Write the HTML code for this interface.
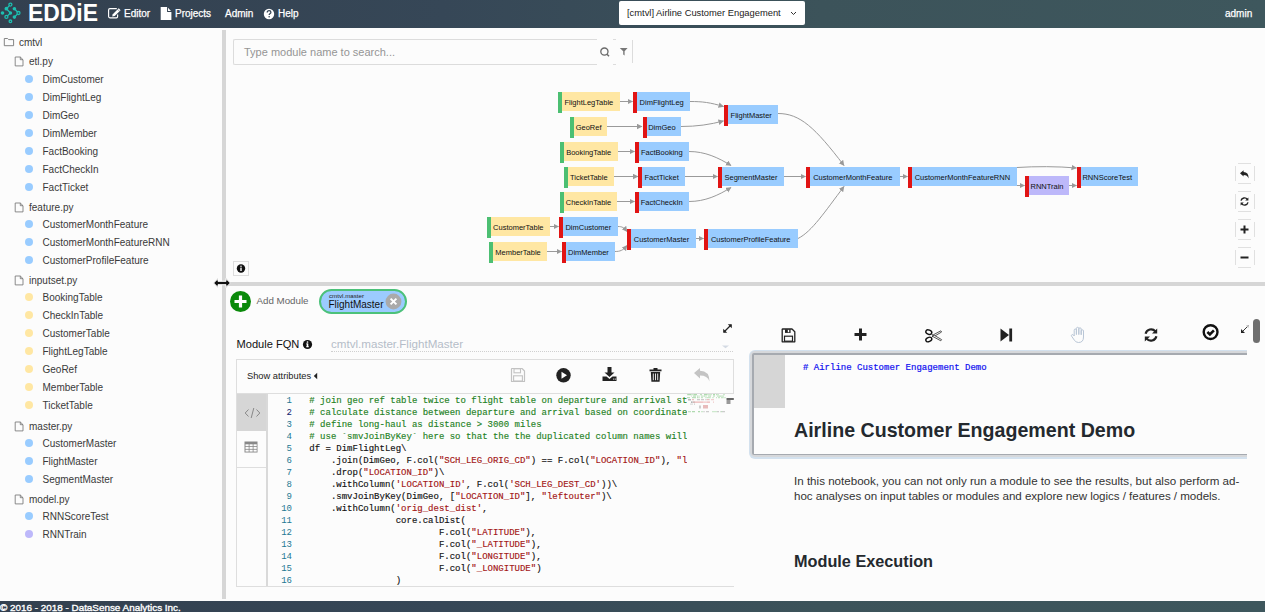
<!DOCTYPE html><html><head><meta charset="utf-8"><style>
html,body{margin:0;padding:0;width:1265px;height:612px;overflow:hidden;background:#fcfcfc;font-family:"Liberation Sans",sans-serif}
.a{position:absolute;white-space:pre}
svg{position:absolute;overflow:visible}
</style></head><body>
<div class="a" style="left:0;top:0;width:1265px;height:28px;background:linear-gradient(to right,#33404f 0%,#364757 35%,#3c535a 65%,#3e575d 100%)"></div>
<svg style="left:0;top:0" width="24" height="28" viewBox="0 0 24 28">
<g stroke="#1dbfb1" stroke-width="1.3" fill="none">
<polyline points="10.4,4.6 6.4,8.7 10.5,13 6.4,16.9"/>
<polyline points="14.4,8.7 18.5,13 14.4,17.1"/>
<circle cx="10.4" cy="4.6" r="1.5" fill="#34414f"/>
<circle cx="6.4" cy="16.9" r="1.5" fill="#34414f"/>
<circle cx="10.4" cy="21.3" r="1.3" fill="#34414f"/>
<circle cx="18.5" cy="13" r="1.5" fill="#34414f"/>
</g>
<g fill="#1dbfb1"><circle cx="2.5" cy="13" r="1.8"/><circle cx="6.4" cy="8.7" r="1.9"/><circle cx="10.5" cy="13" r="1.7"/><circle cx="14.4" cy="8.7" r="1.8"/><circle cx="14.4" cy="17.1" r="1.8"/></g>
</svg>
<div class="a " style="left:28px;top:-3.08px;font-size:23.6px;line-height:33px;height:33px;color:#fff;font-weight:700;font-family:'Liberation Sans';transform:scaleX(0.97);transform-origin:0 0">EDDiE</div>
<svg style="left:104px;top:4px" width="20" height="18" viewBox="0 0 20 18">
<path d="M12.8,4.6 H5.9 Q4.6,4.6 4.6,5.9 V12.6 Q4.6,13.8 5.9,13.8 H12.3 Q13.6,13.8 13.6,12.5 V10.6" stroke="#fff" stroke-width="1.15" fill="none"/>
<path d="M8.1,12.5 L8.8,10.2 L14.7,4.3 L16.6,6.2 L10.7,12.1 Z" fill="#fff"/>
<path d="M13.7,5.4 L15.6,7.3" stroke="#3a4a5a" stroke-width="0.5"/>
</svg>
<div class="a " style="left:124px;top:7.04px;font-size:10px;line-height:14px;height:14px;color:#fff;font-weight:400;font-family:'Liberation Sans';-webkit-text-stroke:0.25px #fff">Editor</div>
<svg style="left:160px;top:7px" width="12" height="14" viewBox="0 0 12 14">
<path d="M0.7,0.1 H7.1 V4.9 H11.4 V13 H0.7 Z" fill="#fff"/><path d="M8,0.8 L11,3.9 H8 Z" fill="#fff"/></svg>
<div class="a " style="left:175px;top:7.04px;font-size:10px;line-height:14px;height:14px;color:#fff;font-weight:400;font-family:'Liberation Sans';-webkit-text-stroke:0.25px #fff">Projects</div>
<div class="a " style="left:225px;top:7.04px;font-size:10px;line-height:14px;height:14px;color:#fff;font-weight:400;font-family:'Liberation Sans';-webkit-text-stroke:0.25px #fff">Admin</div>
<svg style="left:263px;top:8px" width="12" height="12" viewBox="0 0 12 12">
<circle cx="6" cy="6" r="5.2" fill="#fff"/>
<path d="M4.2,4.6 Q4.2,2.7 6.1,2.7 Q7.9,2.7 7.9,4.3 Q7.9,5.2 6.9,5.7 Q6.2,6.1 6.2,7" stroke="#364656" stroke-width="1.3" fill="none"/>
<circle cx="6.15" cy="8.8" r="0.8" fill="#364656"/></svg>
<div class="a " style="left:278px;top:7.04px;font-size:10px;line-height:14px;height:14px;color:#fff;font-weight:400;font-family:'Liberation Sans';-webkit-text-stroke:0.25px #fff">Help</div>
<div class="a" style="left:619px;top:1px;width:186px;height:24px;background:#fff;border-radius:2px"></div>
<div class="a " style="left:627px;top:7.46px;font-size:9.35px;line-height:13px;height:13px;color:#222;font-weight:400;font-family:'Liberation Sans';">[cmtvl] Airline Customer Engagement</div>
<svg style="left:790px;top:11px" width="7" height="5" viewBox="0 0 7 5"><path d="M1,1 L3.5,3.5 L6,1" stroke="#333" stroke-width="1" fill="none"/></svg>
<div class="a " style="left:1225px;top:7.04px;font-size:10px;line-height:14px;height:14px;color:#fff;font-weight:400;font-family:'Liberation Sans';-webkit-text-stroke:0.25px #fff">admin</div>
<svg style="left:3px;top:37px" width="12" height="10" viewBox="0 0 12 10"><path d="M1.3,1.5 H4.6 L5.6,2.6 H10.6 V8.7 H1.3 Z" stroke="#777" stroke-width="0.9" fill="none"/></svg>
<div class="a " style="left:19px;top:36.23px;font-size:10px;line-height:14px;height:14px;color:#3a3a3a;font-weight:400;font-family:'Liberation Sans';">cmtvl</div>
<svg style="left:14px;top:56.3px" width="11" height="11" viewBox="0 0 11 11"><path d="M1.2,1 H6.3 L9,3.7 V9.9 H1.2 Z M6.3,1 V3.7 H9" stroke="#777" stroke-width="0.85" fill="none"/></svg>
<div class="a " style="left:29px;top:55.33px;font-size:10px;line-height:14px;height:14px;color:#3a3a3a;font-weight:400;font-family:'Liberation Sans';">etl.py</div>
<div class="a" style="left:25px;top:75px;width:8px;height:8px;border-radius:50%;background:#99ccff"></div>
<div class="a " style="left:42.5px;top:73.44px;font-size:10px;line-height:14px;height:14px;color:#3a3a3a;font-weight:400;font-family:'Liberation Sans';">DimCustomer</div>
<div class="a" style="left:25px;top:93px;width:8px;height:8px;border-radius:50%;background:#99ccff"></div>
<div class="a " style="left:42.5px;top:91.44px;font-size:10px;line-height:14px;height:14px;color:#3a3a3a;font-weight:400;font-family:'Liberation Sans';">DimFlightLeg</div>
<div class="a" style="left:25px;top:111px;width:8px;height:8px;border-radius:50%;background:#99ccff"></div>
<div class="a " style="left:42.5px;top:109.44px;font-size:10px;line-height:14px;height:14px;color:#3a3a3a;font-weight:400;font-family:'Liberation Sans';">DimGeo</div>
<div class="a" style="left:25px;top:129px;width:8px;height:8px;border-radius:50%;background:#99ccff"></div>
<div class="a " style="left:42.5px;top:127.43px;font-size:10px;line-height:14px;height:14px;color:#3a3a3a;font-weight:400;font-family:'Liberation Sans';">DimMember</div>
<div class="a" style="left:25px;top:147px;width:8px;height:8px;border-radius:50%;background:#99ccff"></div>
<div class="a " style="left:42.5px;top:145.43px;font-size:10px;line-height:14px;height:14px;color:#3a3a3a;font-weight:400;font-family:'Liberation Sans';">FactBooking</div>
<div class="a" style="left:25px;top:165px;width:8px;height:8px;border-radius:50%;background:#99ccff"></div>
<div class="a " style="left:42.5px;top:163.43px;font-size:10px;line-height:14px;height:14px;color:#3a3a3a;font-weight:400;font-family:'Liberation Sans';">FactCheckIn</div>
<div class="a" style="left:25px;top:183px;width:8px;height:8px;border-radius:50%;background:#99ccff"></div>
<div class="a " style="left:42.5px;top:181.43px;font-size:10px;line-height:14px;height:14px;color:#3a3a3a;font-weight:400;font-family:'Liberation Sans';">FactTicket</div>
<svg style="left:14px;top:201.5px" width="11" height="11" viewBox="0 0 11 11"><path d="M1.2,1 H6.3 L9,3.7 V9.9 H1.2 Z M6.3,1 V3.7 H9" stroke="#777" stroke-width="0.85" fill="none"/></svg>
<div class="a " style="left:29px;top:200.53px;font-size:10px;line-height:14px;height:14px;color:#3a3a3a;font-weight:400;font-family:'Liberation Sans';">feature.py</div>
<div class="a" style="left:25px;top:220px;width:8px;height:8px;border-radius:50%;background:#99ccff"></div>
<div class="a " style="left:42.5px;top:218.43px;font-size:10px;line-height:14px;height:14px;color:#3a3a3a;font-weight:400;font-family:'Liberation Sans';">CustomerMonthFeature</div>
<div class="a" style="left:25px;top:238px;width:8px;height:8px;border-radius:50%;background:#99ccff"></div>
<div class="a " style="left:42.5px;top:236.43px;font-size:10px;line-height:14px;height:14px;color:#3a3a3a;font-weight:400;font-family:'Liberation Sans';">CustomerMonthFeatureRNN</div>
<div class="a" style="left:25px;top:256px;width:8px;height:8px;border-radius:50%;background:#99ccff"></div>
<div class="a " style="left:42.5px;top:254.43px;font-size:10px;line-height:14px;height:14px;color:#3a3a3a;font-weight:400;font-family:'Liberation Sans';">CustomerProfileFeature</div>
<svg style="left:14px;top:274.5px" width="11" height="11" viewBox="0 0 11 11"><path d="M1.2,1 H6.3 L9,3.7 V9.9 H1.2 Z M6.3,1 V3.7 H9" stroke="#777" stroke-width="0.85" fill="none"/></svg>
<div class="a " style="left:29px;top:273.54px;font-size:10px;line-height:14px;height:14px;color:#3a3a3a;font-weight:400;font-family:'Liberation Sans';">inputset.py</div>
<div class="a" style="left:25px;top:293px;width:8px;height:8px;border-radius:50%;background:#ffe7a3"></div>
<div class="a " style="left:42.5px;top:291.44px;font-size:10px;line-height:14px;height:14px;color:#3a3a3a;font-weight:400;font-family:'Liberation Sans';">BookingTable</div>
<div class="a" style="left:25px;top:311px;width:8px;height:8px;border-radius:50%;background:#ffe7a3"></div>
<div class="a " style="left:42.5px;top:309.44px;font-size:10px;line-height:14px;height:14px;color:#3a3a3a;font-weight:400;font-family:'Liberation Sans';">CheckInTable</div>
<div class="a" style="left:25px;top:329px;width:8px;height:8px;border-radius:50%;background:#ffe7a3"></div>
<div class="a " style="left:42.5px;top:327.44px;font-size:10px;line-height:14px;height:14px;color:#3a3a3a;font-weight:400;font-family:'Liberation Sans';">CustomerTable</div>
<div class="a" style="left:25px;top:347px;width:8px;height:8px;border-radius:50%;background:#ffe7a3"></div>
<div class="a " style="left:42.5px;top:345.44px;font-size:10px;line-height:14px;height:14px;color:#3a3a3a;font-weight:400;font-family:'Liberation Sans';">FlightLegTable</div>
<div class="a" style="left:25px;top:365px;width:8px;height:8px;border-radius:50%;background:#ffe7a3"></div>
<div class="a " style="left:42.5px;top:363.44px;font-size:10px;line-height:14px;height:14px;color:#3a3a3a;font-weight:400;font-family:'Liberation Sans';">GeoRef</div>
<div class="a" style="left:25px;top:383px;width:8px;height:8px;border-radius:50%;background:#ffe7a3"></div>
<div class="a " style="left:42.5px;top:381.44px;font-size:10px;line-height:14px;height:14px;color:#3a3a3a;font-weight:400;font-family:'Liberation Sans';">MemberTable</div>
<div class="a" style="left:25px;top:401px;width:8px;height:8px;border-radius:50%;background:#ffe7a3"></div>
<div class="a " style="left:42.5px;top:399.44px;font-size:10px;line-height:14px;height:14px;color:#3a3a3a;font-weight:400;font-family:'Liberation Sans';">TicketTable</div>
<svg style="left:14px;top:420.5px" width="11" height="11" viewBox="0 0 11 11"><path d="M1.2,1 H6.3 L9,3.7 V9.9 H1.2 Z M6.3,1 V3.7 H9" stroke="#777" stroke-width="0.85" fill="none"/></svg>
<div class="a " style="left:29px;top:419.54px;font-size:10px;line-height:14px;height:14px;color:#3a3a3a;font-weight:400;font-family:'Liberation Sans';">master.py</div>
<div class="a" style="left:25px;top:439px;width:8px;height:8px;border-radius:50%;background:#99ccff"></div>
<div class="a " style="left:42.5px;top:437.44px;font-size:10px;line-height:14px;height:14px;color:#3a3a3a;font-weight:400;font-family:'Liberation Sans';">CustomerMaster</div>
<div class="a" style="left:25px;top:457px;width:8px;height:8px;border-radius:50%;background:#99ccff"></div>
<div class="a " style="left:42.5px;top:455.44px;font-size:10px;line-height:14px;height:14px;color:#3a3a3a;font-weight:400;font-family:'Liberation Sans';">FlightMaster</div>
<div class="a" style="left:25px;top:475px;width:8px;height:8px;border-radius:50%;background:#99ccff"></div>
<div class="a " style="left:42.5px;top:473.44px;font-size:10px;line-height:14px;height:14px;color:#3a3a3a;font-weight:400;font-family:'Liberation Sans';">SegmentMaster</div>
<svg style="left:14px;top:493.5px" width="11" height="11" viewBox="0 0 11 11"><path d="M1.2,1 H6.3 L9,3.7 V9.9 H1.2 Z M6.3,1 V3.7 H9" stroke="#777" stroke-width="0.85" fill="none"/></svg>
<div class="a " style="left:29px;top:492.54px;font-size:10px;line-height:14px;height:14px;color:#3a3a3a;font-weight:400;font-family:'Liberation Sans';">model.py</div>
<div class="a" style="left:25px;top:512px;width:8px;height:8px;border-radius:50%;background:#99ccff"></div>
<div class="a " style="left:42.5px;top:510.44px;font-size:10px;line-height:14px;height:14px;color:#3a3a3a;font-weight:400;font-family:'Liberation Sans';">RNNScoreTest</div>
<div class="a" style="left:25px;top:530px;width:8px;height:8px;border-radius:50%;background:#bdb8fa"></div>
<div class="a " style="left:42.5px;top:528.44px;font-size:10px;line-height:14px;height:14px;color:#3a3a3a;font-weight:400;font-family:'Liberation Sans';">RNNTrain</div>
<div class="a" style="left:222px;top:30px;width:4px;height:569px;background:#d6d6d6;"></div>
<div class="a" style="left:233px;top:39px;width:363px;height:24px;border:1px solid #dcdcdc;border-right:none;border-radius:2px 0 0 2px;background:#fcfcfc"></div>
<div class="a " style="left:244px;top:44.99px;font-size:11px;line-height:15px;height:15px;color:#959595;font-weight:400;font-family:'Liberation Sans';">Type module name to search...</div>
<svg style="left:598px;top:45px" width="14" height="14" viewBox="0 0 14 14"><circle cx="6.4" cy="6.6" r="3.6" stroke="#6a6a6a" stroke-width="1.3" fill="none"/><path d="M9,9.2 L11,11.2" stroke="#6a6a6a" stroke-width="1.5"/></svg>
<div class="a" style="left:613px;top:39px;width:3px;height:1px;background:#dcdcdc"></div><div class="a" style="left:613px;top:64px;width:3px;height:1px;background:#dcdcdc"></div>
<svg style="left:619px;top:47px" width="10" height="10" viewBox="0 0 10 10"><path d="M0.8,1 H8.6 L5.6,4.2 V8.4 L4.2,7.4 V4.2 Z" fill="#777"/></svg>
<div class="a" style="left:632px;top:40px;width:1px;height:23px;background:#dcdcdc;"></div>
<svg style="left:0;top:0" width="1265" height="300" viewBox="0 0 1265 300"><defs><marker id="ar" markerUnits="userSpaceOnUse" markerWidth="6" markerHeight="6" refX="5" refY="2.75" orient="auto"><path d="M0,0 L5.5,2.75 L0,5.5 Z" fill="#999"/></marker></defs><g stroke="#9a9a9a" stroke-width="1" fill="none" transform="translate(0,-0.5)"><path d="M620,102 L632.5,102" marker-end="url(#ar)"/><path d="M607,127 L642,127" marker-end="url(#ar)"/><path d="M617.6,152 L634.5,152" marker-end="url(#ar)"/><path d="M614,177 L638,177" marker-end="url(#ar)"/><path d="M617,202 L634.5,202" marker-end="url(#ar)"/><path d="M550,227 L558.5,227" marker-end="url(#ar)"/><path d="M547,252 L561.5,252" marker-end="url(#ar)"/><path d="M690,102 C703,102 710,103 723.5,107" marker-end="url(#ar)"/><path d="M681,127 C697,127 710,125 723.5,121.5" marker-end="url(#ar)"/><path d="M689,152 C705,152 718,158 731,166" marker-end="url(#ar)"/><path d="M685,177 L717.5,177" marker-end="url(#ar)"/><path d="M689,202 C705,202 718,196 731,188" marker-end="url(#ar)"/><path d="M618,227 C622,227 624,228 627,232" marker-end="url(#ar)"/><path d="M615,252 C620,252 623,251 627,246" marker-end="url(#ar)"/><path d="M696,239 L703.5,239" marker-end="url(#ar)"/><path d="M778,114 C800,114 815,128 844,166" marker-end="url(#ar)"/><path d="M784,177 L805.5,177" marker-end="url(#ar)"/><path d="M798,239 C812,232 825,212 844,187" marker-end="url(#ar)"/><path d="M900,177 L907.5,177" marker-end="url(#ar)"/><path d="M1017,186 L1024.5,186" marker-end="url(#ar)"/><path d="M1017,168 C1035,166.8 1058,166.8 1076.5,168.5" marker-end="url(#ar)"/><path d="M1069,186 L1076.5,186" marker-end="url(#ar)"/></g></svg>
<div class="a" style="left:490.6px;top:217px;width:59.4px;height:19px;background:#ffe7a3;"></div>
<div class="a" style="left:486.6px;top:217px;width:4px;height:21px;background:#4cbf72;"></div>
<div class="a" style="left:486.6px;top:218px;width:63.40px;height:20px;line-height:20px;text-align:center;font-size:7.5px;color:#111">CustomerTable</div>
<div class="a" style="left:493.2px;top:242px;width:53.8px;height:19px;background:#ffe7a3;"></div>
<div class="a" style="left:489.2px;top:242px;width:4px;height:21px;background:#4cbf72;"></div>
<div class="a" style="left:489.2px;top:243px;width:57.80px;height:20px;line-height:20px;text-align:center;font-size:7.5px;color:#111">MemberTable</div>
<div class="a" style="left:561.7px;top:92px;width:58.3px;height:19px;background:#ffe7a3;"></div>
<div class="a" style="left:557.7px;top:92px;width:4px;height:21px;background:#4cbf72;"></div>
<div class="a" style="left:557.7px;top:93px;width:62.30px;height:20px;line-height:20px;text-align:center;font-size:7.5px;color:#111">FlightLegTable</div>
<div class="a" style="left:574.2px;top:117px;width:32.8px;height:19px;background:#ffe7a3;"></div>
<div class="a" style="left:570.2px;top:117px;width:4px;height:21px;background:#4cbf72;"></div>
<div class="a" style="left:570.2px;top:118px;width:36.80px;height:20px;line-height:20px;text-align:center;font-size:7.5px;color:#111">GeoRef</div>
<div class="a" style="left:563.8px;top:142px;width:53.8px;height:19px;background:#ffe7a3;"></div>
<div class="a" style="left:559.8px;top:142px;width:4px;height:21px;background:#4cbf72;"></div>
<div class="a" style="left:559.8px;top:143px;width:57.80px;height:20px;line-height:20px;text-align:center;font-size:7.5px;color:#111">BookingTable</div>
<div class="a" style="left:567.5px;top:167px;width:46.5px;height:19px;background:#ffe7a3;"></div>
<div class="a" style="left:563.5px;top:167px;width:4px;height:21px;background:#4cbf72;"></div>
<div class="a" style="left:563.5px;top:168px;width:50.50px;height:20px;line-height:20px;text-align:center;font-size:7.5px;color:#111">TicketTable</div>
<div class="a" style="left:564px;top:192px;width:53px;height:19px;background:#ffe7a3;"></div>
<div class="a" style="left:560px;top:192px;width:4px;height:21px;background:#4cbf72;"></div>
<div class="a" style="left:560px;top:193px;width:57.00px;height:20px;line-height:20px;text-align:center;font-size:7.5px;color:#111">CheckInTable</div>
<div class="a" style="left:563px;top:217px;width:54.7px;height:19px;background:#99ccff;"></div>
<div class="a" style="left:559px;top:217px;width:4px;height:21px;background:#e11414;"></div>
<div class="a" style="left:559px;top:218px;width:58.70px;height:20px;line-height:20px;text-align:center;font-size:7.5px;color:#111">DimCustomer</div>
<div class="a" style="left:566px;top:242px;width:48.8px;height:19px;background:#99ccff;"></div>
<div class="a" style="left:562px;top:242px;width:4px;height:21px;background:#e11414;"></div>
<div class="a" style="left:562px;top:243px;width:52.80px;height:20px;line-height:20px;text-align:center;font-size:7.5px;color:#111">DimMember</div>
<div class="a" style="left:637.3px;top:92px;width:52.7px;height:19px;background:#99ccff;"></div>
<div class="a" style="left:633.3px;top:92px;width:4px;height:21px;background:#e11414;"></div>
<div class="a" style="left:633.3px;top:93px;width:56.70px;height:20px;line-height:20px;text-align:center;font-size:7.5px;color:#111">DimFlightLeg</div>
<div class="a" style="left:646.8px;top:117px;width:34.2px;height:19px;background:#99ccff;"></div>
<div class="a" style="left:642.8px;top:117px;width:4px;height:21px;background:#e11414;"></div>
<div class="a" style="left:642.8px;top:118px;width:38.20px;height:20px;line-height:20px;text-align:center;font-size:7.5px;color:#111">DimGeo</div>
<div class="a" style="left:638.9px;top:142px;width:49.9px;height:19px;background:#99ccff;"></div>
<div class="a" style="left:634.9px;top:142px;width:4px;height:21px;background:#e11414;"></div>
<div class="a" style="left:634.9px;top:143px;width:53.90px;height:20px;line-height:20px;text-align:center;font-size:7.5px;color:#111">FactBooking</div>
<div class="a" style="left:642.3px;top:167px;width:42.7px;height:19px;background:#99ccff;"></div>
<div class="a" style="left:638.3px;top:167px;width:4px;height:21px;background:#e11414;"></div>
<div class="a" style="left:638.3px;top:168px;width:46.70px;height:20px;line-height:20px;text-align:center;font-size:7.5px;color:#111">FactTicket</div>
<div class="a" style="left:638.8px;top:192px;width:49.9px;height:19px;background:#99ccff;"></div>
<div class="a" style="left:634.8px;top:192px;width:4px;height:21px;background:#e11414;"></div>
<div class="a" style="left:634.8px;top:193px;width:53.90px;height:20px;line-height:20px;text-align:center;font-size:7.5px;color:#111">FactCheckIn</div>
<div class="a" style="left:631px;top:229px;width:65px;height:19px;background:#99ccff;"></div>
<div class="a" style="left:627px;top:229px;width:4px;height:21px;background:#e11414;"></div>
<div class="a" style="left:627px;top:230px;width:69.00px;height:20px;line-height:20px;text-align:center;font-size:7.5px;color:#111">CustomerMaster</div>
<div class="a" style="left:728.2px;top:105px;width:50.1px;height:19px;background:#99ccff;"></div>
<div class="a" style="left:724.2px;top:105px;width:4px;height:21px;background:#e11414;"></div>
<div class="a" style="left:724.2px;top:106px;width:54.10px;height:20px;line-height:20px;text-align:center;font-size:7.5px;color:#111">FlightMaster</div>
<div class="a" style="left:722px;top:167px;width:62px;height:19px;background:#99ccff;"></div>
<div class="a" style="left:718px;top:167px;width:4px;height:21px;background:#e11414;"></div>
<div class="a" style="left:718px;top:168px;width:66.00px;height:20px;line-height:20px;text-align:center;font-size:7.5px;color:#111">SegmentMaster</div>
<div class="a" style="left:707.8px;top:229px;width:89.9px;height:19px;background:#99ccff;"></div>
<div class="a" style="left:703.8px;top:229px;width:4px;height:21px;background:#e11414;"></div>
<div class="a" style="left:703.8px;top:230px;width:93.90px;height:20px;line-height:20px;text-align:center;font-size:7.5px;color:#111">CustomerProfileFeature</div>
<div class="a" style="left:810px;top:167px;width:89.6px;height:19px;background:#99ccff;"></div>
<div class="a" style="left:806px;top:167px;width:4px;height:21px;background:#e11414;"></div>
<div class="a" style="left:806px;top:168px;width:93.60px;height:20px;line-height:20px;text-align:center;font-size:7.5px;color:#111">CustomerMonthFeature</div>
<div class="a" style="left:911.8px;top:167px;width:105.2px;height:19px;background:#99ccff;"></div>
<div class="a" style="left:907.8px;top:167px;width:4px;height:21px;background:#e11414;"></div>
<div class="a" style="left:907.8px;top:168px;width:109.20px;height:20px;line-height:20px;text-align:center;font-size:7.5px;color:#111">CustomerMonthFeatureRNN</div>
<div class="a" style="left:1029px;top:176px;width:40px;height:19px;background:#bdb8fa;"></div>
<div class="a" style="left:1025px;top:176px;width:4px;height:21px;background:#e11414;"></div>
<div class="a" style="left:1025px;top:177px;width:44.00px;height:20px;line-height:20px;text-align:center;font-size:7.5px;color:#111">RNNTrain</div>
<div class="a" style="left:1080.8px;top:167px;width:56.9px;height:19px;background:#99ccff;"></div>
<div class="a" style="left:1076.8px;top:167px;width:4px;height:21px;background:#e11414;"></div>
<div class="a" style="left:1076.8px;top:168px;width:60.90px;height:20px;line-height:20px;text-align:center;font-size:7.5px;color:#111">RNNScoreTest</div>
<div class="a" style="left:233px;top:261px;width:14px;height:13px;border:1px solid #ddd;background:#fcfcfc"></div>
<svg style="left:236px;top:263.5px" width="10" height="9" viewBox="0 0 10 9"><circle cx="5" cy="4.5" r="4.2" fill="#111"/><rect x="4.3" y="3.6" width="1.4" height="3.4" fill="#fff"/><circle cx="5" cy="2.3" r="0.75" fill="#fff"/></svg>
<div class="a" style="left:1238px;top:163px;width:13px;height:1px;background:#e0e0e0;"></div>
<div class="a" style="left:1238px;top:183px;width:13px;height:1px;background:#e0e0e0;"></div>
<div class="a" style="left:1235px;top:166px;width:1px;height:15px;background:#e0e0e0;"></div>
<div class="a" style="left:1254px;top:166px;width:1px;height:15px;background:#e0e0e0;"></div>
<div class="a" style="left:1238px;top:191px;width:13px;height:1px;background:#e0e0e0;"></div>
<div class="a" style="left:1238px;top:211px;width:13px;height:1px;background:#e0e0e0;"></div>
<div class="a" style="left:1235px;top:194px;width:1px;height:15px;background:#e0e0e0;"></div>
<div class="a" style="left:1254px;top:194px;width:1px;height:15px;background:#e0e0e0;"></div>
<div class="a" style="left:1238px;top:219px;width:13px;height:1px;background:#e0e0e0;"></div>
<div class="a" style="left:1238px;top:239px;width:13px;height:1px;background:#e0e0e0;"></div>
<div class="a" style="left:1235px;top:222px;width:1px;height:15px;background:#e0e0e0;"></div>
<div class="a" style="left:1254px;top:222px;width:1px;height:15px;background:#e0e0e0;"></div>
<div class="a" style="left:1238px;top:247px;width:13px;height:1px;background:#e0e0e0;"></div>
<div class="a" style="left:1238px;top:267px;width:13px;height:1px;background:#e0e0e0;"></div>
<div class="a" style="left:1235px;top:250px;width:1px;height:15px;background:#e0e0e0;"></div>
<div class="a" style="left:1254px;top:250px;width:1px;height:15px;background:#e0e0e0;"></div>
<svg style="left:1239px;top:169px" width="11" height="11" viewBox="0 0 11 11"><path d="M1,4.2 L4.6,1.2 V3 Q9.6,3 9.6,9.4 Q8.4,6 4.6,6 V7.6 Z" fill="#222"/></svg>
<svg style="left:1239px;top:196px" width="11" height="11" viewBox="0 0 11 11"><path d="M2,4.6 A3.6,3.6 0 0 1 8.4,3.4" stroke="#222" stroke-width="1.4" fill="none"/><path d="M9.4,1.4 V4.6 H6.2 Z" fill="#222"/><path d="M9,6.4 A3.6,3.6 0 0 1 2.6,7.6" stroke="#222" stroke-width="1.4" fill="none"/><path d="M1.6,9.6 V6.4 H4.8 Z" fill="#222"/></svg>
<svg style="left:1239px;top:224px" width="11" height="11" viewBox="0 0 11 11"><path d="M5.5,1.5 V9.5 M1.5,5.5 H9.5" stroke="#222" stroke-width="2"/></svg>
<svg style="left:1239px;top:252px" width="11" height="11" viewBox="0 0 11 11"><path d="M1.5,5.5 H9.5" stroke="#222" stroke-width="2"/></svg>
<div class="a" style="left:226px;top:282px;width:1039px;height:4px;background:#d6d6d6;"></div>
<svg style="left:212px;top:277px" width="20" height="12" viewBox="0 0 20 12"><path d="M1.6,6 L6,1.6 V4.3 H14 V1.6 L18.4,6 L14,10.4 V7.7 H6 V10.4 Z" fill="#111" stroke="#fff" stroke-width="1"/></svg>
<svg style="left:229px;top:290px" width="23" height="23" viewBox="0 0 23 23"><circle cx="11.5" cy="11.5" r="10.5" fill="#0b8a0b"/><path d="M11.5,5.5 V17.5 M5.5,11.5 H17.5" stroke="#fff" stroke-width="3.2"/></svg>
<div class="a " style="left:256.5px;top:294.12px;font-size:9.75px;line-height:14px;height:14px;color:#666;font-weight:400;font-family:'Liberation Sans';">Add Module</div>
<div class="a" style="left:319px;top:289px;width:84px;height:21px;border:2px solid #4cc17a;border-radius:13px;background:#9ccbff"></div>
<div class="a " style="left:329px;top:290.95px;font-size:6.2px;line-height:9px;height:9px;color:#222;font-weight:400;font-family:'Liberation Sans';">cmtvl.master</div>
<div class="a " style="left:328.5px;top:298.44px;font-size:10px;line-height:14px;height:14px;color:#111;font-weight:400;font-family:'Liberation Sans';">FlightMaster</div>
<svg style="left:385px;top:293px" width="17" height="17" viewBox="0 0 17 17"><circle cx="8.5" cy="8.5" r="7.9" fill="#aaa"/><path d="M5.6,5.6 L11.4,11.4 M11.4,5.6 L5.6,11.4" stroke="#fff" stroke-width="2"/></svg>
<div class="a " style="left:236.5px;top:336.25px;font-size:11.1px;line-height:16px;height:16px;color:#111;font-weight:400;font-family:'Liberation Sans';">Module FQN</div>
<svg style="left:302px;top:338.5px" width="11" height="11" viewBox="0 0 11 11"><circle cx="5.5" cy="5.5" r="4.6" fill="#111"/><rect x="4.7" y="4.5" width="1.6" height="3.6" fill="#fff"/><rect x="4.2" y="7.3" width="2.6" height="0.9" fill="#fff"/><rect x="4.2" y="4.5" width="1.5" height="0.8" fill="#fff"/><circle cx="5.5" cy="3" r="0.85" fill="#fff"/></svg>
<div class="a " style="left:331px;top:336.48px;font-size:11.6px;line-height:16px;height:16px;color:#b5bcc8;font-weight:400;font-family:'Liberation Sans';">cmtvl.master.FlightMaster</div>
<div class="a" style="left:331px;top:351px;width:402px;height:0;border-top:1px dotted #d0d0d0"></div>
<svg style="left:721px;top:344.5px" width="9" height="4" viewBox="0 0 9 4"><path d="M1,0.5 H8 L4.5,3.3 Z" fill="#d3dae3"/></svg>
<svg style="left:722px;top:323px" width="11" height="11" viewBox="0 0 11 11"><path d="M2,9 L9,2" stroke="#222" stroke-width="1.3"/><path d="M5.8,1.2 H9.8 V5.2 Z M1.2,5.8 V9.8 H5.2 Z" fill="#222"/></svg>
<div class="a" style="left:236px;top:359px;width:497px;height:226px;border:1px solid #dedede;border-right:none;background:#fcfcfc"></div>
<div class="a" style="left:733px;top:359px;width:1px;height:35px;background:#dedede;"></div>
<div class="a" style="left:237px;top:393px;width:496px;height:1px;background:#dedede;"></div>
<div class="a " style="left:247px;top:369.78px;font-size:9.3px;line-height:13px;height:13px;color:#222;font-weight:400;font-family:'Liberation Sans';">Show attributes</div>
<svg style="left:313px;top:372px" width="5" height="8" viewBox="0 0 5 8"><path d="M4.2,0.8 V7.2 L0.8,4 Z" fill="#222"/></svg>
<svg style="left:510px;top:367px" width="16" height="16" viewBox="0 0 16 16"><path d="M2,1.5 H12 L14.5,4 V14.5 H1.5 V2 Z" stroke="#c2c2c2" stroke-width="1.2" fill="none" stroke-linejoin="round"/><rect x="4" y="1.8" width="6.5" height="4" stroke="#c2c2c2" stroke-width="1.1" fill="none"/><rect x="3.6" y="8.8" width="8.8" height="5.2" stroke="#c2c2c2" stroke-width="1.1" fill="none"/></svg>
<svg style="left:555px;top:367px" width="17" height="17" viewBox="0 0 17 17"><circle cx="8.5" cy="8.3" r="7.2" fill="#222"/><path d="M6.5,4.8 L12,8.3 L6.5,11.8 Z" fill="#fff"/></svg>
<svg style="left:601px;top:366px" width="17" height="17" viewBox="0 0 17 17"><path d="M6.5,1 H10.5 V6.5 H13.5 L8.5,11 L3.5,6.5 H6.5 Z" fill="#222"/><path d="M1.5,10.5 H5.5 L8.5,13 L11.5,10.5 H15.5 V15 H1.5 Z" fill="#222"/><rect x="12.2" y="12.6" width="1" height="1" fill="#fff"/><rect x="13.8" y="12.6" width="1" height="1" fill="#fff"/></svg>
<svg style="left:648px;top:367px" width="15" height="16" viewBox="0 0 15 16"><rect x="1.5" y="2.5" width="12" height="1.8" fill="#222"/><rect x="5.5" y="1" width="4" height="2" fill="#222"/><path d="M2.8,5 H12.2 L11.6,14.8 H3.4 Z" fill="#222"/><path d="M5.3,6.5 V13.2 M7.5,6.5 V13.2 M9.7,6.5 V13.2" stroke="#fcfcfc" stroke-width="0.9"/></svg>
<svg style="left:693px;top:367px" width="18" height="16" viewBox="0 0 18 16"><path d="M1,6 L7,1 V3.8 Q16.5,4 16.5,14.5 Q14.5,8.6 7,8.6 V11.4 Z" fill="#c4c4c4"/></svg>
<div class="a" style="left:237px;top:394px;width:30px;height:37px;background:#d6d6d6;"></div>
<div class="a" style="left:237px;top:467px;width:30px;height:1px;background:#dedede;"></div>
<div class="a" style="left:266px;top:394px;width:2px;height:192px;background:#d9d9d9;"></div>
<svg style="left:244px;top:407px" width="17" height="12" viewBox="0 0 17 12"><path d="M4.5,2.5 L1.2,6 L4.5,9.5 M12.5,2.5 L15.8,6 L12.5,9.5 M9.8,1 L7.2,11" stroke="#888" stroke-width="1" fill="none"/></svg>
<svg style="left:244px;top:441px" width="15" height="12" viewBox="0 0 15 12"><rect x="0.5" y="0.5" width="13" height="11" fill="#888"/><g fill="#fcfcfc"><rect x="1.5" y="3.3" width="3.2" height="1.9"/><rect x="5.5" y="3.3" width="3.2" height="1.9"/><rect x="9.5" y="3.3" width="3.2" height="1.9"/><rect x="1.5" y="6" width="3.2" height="1.9"/><rect x="5.5" y="6" width="3.2" height="1.9"/><rect x="9.5" y="6" width="3.2" height="1.9"/><rect x="1.5" y="8.7" width="3.2" height="1.9"/><rect x="5.5" y="8.7" width="3.2" height="1.9"/><rect x="9.5" y="8.7" width="3.2" height="1.9"/></g></svg>
<div class="a" style="left:268px;top:394px;width:420px;height:191px;overflow:hidden">
<div class="a" style="left:0;top:1px;width:24px;text-align:right;font-family:'Liberation Mono';font-size:9px;line-height:12px;color:#237893">1</div>
<div class="a" style="left:41.30000000000001px;top:1px;width:377.70px;overflow:hidden;font-family:'Liberation Mono';font-size:9px;line-height:12px;color:#222;-webkit-text-stroke:0.15px currentColor"><span style="color:#1f821f"># join geo ref table twice to flight table on departure and arrival station</span></div>
<div class="a" style="left:0;top:13px;width:24px;text-align:right;font-family:'Liberation Mono';font-size:9px;line-height:12px;color:#0b216f">2</div>
<div class="a" style="left:41.30000000000001px;top:13px;width:377.70px;overflow:hidden;font-family:'Liberation Mono';font-size:9px;line-height:12px;color:#222;-webkit-text-stroke:0.15px currentColor"><span style="color:#1f821f"># calculate distance between departure and arrival based on coordinates</span></div>
<div class="a" style="left:0;top:25px;width:24px;text-align:right;font-family:'Liberation Mono';font-size:9px;line-height:12px;color:#237893">3</div>
<div class="a" style="left:41.30000000000001px;top:25px;width:377.70px;overflow:hidden;font-family:'Liberation Mono';font-size:9px;line-height:12px;color:#222;-webkit-text-stroke:0.15px currentColor"><span style="color:#1f821f"># define long-haul as distance &gt; 3000 miles</span></div>
<div class="a" style="left:0;top:37px;width:24px;text-align:right;font-family:'Liberation Mono';font-size:9px;line-height:12px;color:#237893">4</div>
<div class="a" style="left:41.30000000000001px;top:37px;width:377.70px;overflow:hidden;font-family:'Liberation Mono';font-size:9px;line-height:12px;color:#222;-webkit-text-stroke:0.15px currentColor"><span style="color:#1f821f"># use `smvJoinByKey` here so that the the duplicated column names will be prefixed</span></div>
<div class="a" style="left:0;top:49px;width:24px;text-align:right;font-family:'Liberation Mono';font-size:9px;line-height:12px;color:#237893">5</div>
<div class="a" style="left:41.30000000000001px;top:49px;width:377.70px;overflow:hidden;font-family:'Liberation Mono';font-size:9px;line-height:12px;color:#222;-webkit-text-stroke:0.15px currentColor"><span style="color:#111">df = DimFlightLeg\</span></div>
<div class="a" style="left:0;top:61px;width:24px;text-align:right;font-family:'Liberation Mono';font-size:9px;line-height:12px;color:#237893">6</div>
<div class="a" style="left:41.30000000000001px;top:61px;width:377.70px;overflow:hidden;font-family:'Liberation Mono';font-size:9px;line-height:12px;color:#222;-webkit-text-stroke:0.15px currentColor"><span style="color:#111">    .join(DimGeo, F.col(</span><span style="color:#a31515">&quot;SCH_LEG_ORIG_CD&quot;</span><span style="color:#111">) == F.col(</span><span style="color:#a31515">&quot;LOCATION_ID&quot;</span><span style="color:#111">), </span><span style="color:#a31515">&quot;left&quot;</span></div>
<div class="a" style="left:0;top:73px;width:24px;text-align:right;font-family:'Liberation Mono';font-size:9px;line-height:12px;color:#237893">7</div>
<div class="a" style="left:41.30000000000001px;top:73px;width:377.70px;overflow:hidden;font-family:'Liberation Mono';font-size:9px;line-height:12px;color:#222;-webkit-text-stroke:0.15px currentColor"><span style="color:#111">    .drop(</span><span style="color:#a31515">&quot;LOCATION_ID&quot;</span><span style="color:#111">)\</span></div>
<div class="a" style="left:0;top:85px;width:24px;text-align:right;font-family:'Liberation Mono';font-size:9px;line-height:12px;color:#237893">8</div>
<div class="a" style="left:41.30000000000001px;top:85px;width:377.70px;overflow:hidden;font-family:'Liberation Mono';font-size:9px;line-height:12px;color:#222;-webkit-text-stroke:0.15px currentColor"><span style="color:#111">    .withColumn(</span><span style="color:#a31515">&#x27;LOCATION_ID&#x27;</span><span style="color:#111">, F.col(</span><span style="color:#a31515">&#x27;SCH_LEG_DEST_CD&#x27;</span><span style="color:#111">))\</span></div>
<div class="a" style="left:0;top:97px;width:24px;text-align:right;font-family:'Liberation Mono';font-size:9px;line-height:12px;color:#237893">9</div>
<div class="a" style="left:41.30000000000001px;top:97px;width:377.70px;overflow:hidden;font-family:'Liberation Mono';font-size:9px;line-height:12px;color:#222;-webkit-text-stroke:0.15px currentColor"><span style="color:#111">    .smvJoinByKey(DimGeo, [</span><span style="color:#a31515">&quot;LOCATION_ID&quot;</span><span style="color:#111">], </span><span style="color:#a31515">&quot;leftouter&quot;</span><span style="color:#111">)\</span></div>
<div class="a" style="left:0;top:109px;width:24px;text-align:right;font-family:'Liberation Mono';font-size:9px;line-height:12px;color:#237893">10</div>
<div class="a" style="left:41.30000000000001px;top:109px;width:377.70px;overflow:hidden;font-family:'Liberation Mono';font-size:9px;line-height:12px;color:#222;-webkit-text-stroke:0.15px currentColor"><span style="color:#111">    .withColumn(</span><span style="color:#a31515">&#x27;orig_dest_dist&#x27;</span><span style="color:#111">,</span></div>
<div class="a" style="left:0;top:121px;width:24px;text-align:right;font-family:'Liberation Mono';font-size:9px;line-height:12px;color:#237893">11</div>
<div class="a" style="left:41.30000000000001px;top:121px;width:377.70px;overflow:hidden;font-family:'Liberation Mono';font-size:9px;line-height:12px;color:#222;-webkit-text-stroke:0.15px currentColor"><span style="color:#111">                core.calDist(</span></div>
<div class="a" style="left:0;top:133px;width:24px;text-align:right;font-family:'Liberation Mono';font-size:9px;line-height:12px;color:#237893">12</div>
<div class="a" style="left:41.30000000000001px;top:133px;width:377.70px;overflow:hidden;font-family:'Liberation Mono';font-size:9px;line-height:12px;color:#222;-webkit-text-stroke:0.15px currentColor"><span style="color:#111">                        F.col(</span><span style="color:#a31515">&quot;LATITUDE&quot;</span><span style="color:#111">),</span></div>
<div class="a" style="left:0;top:145px;width:24px;text-align:right;font-family:'Liberation Mono';font-size:9px;line-height:12px;color:#237893">13</div>
<div class="a" style="left:41.30000000000001px;top:145px;width:377.70px;overflow:hidden;font-family:'Liberation Mono';font-size:9px;line-height:12px;color:#222;-webkit-text-stroke:0.15px currentColor"><span style="color:#111">                        F.col(</span><span style="color:#a31515">&quot;_LATITUDE&quot;</span><span style="color:#111">),</span></div>
<div class="a" style="left:0;top:157px;width:24px;text-align:right;font-family:'Liberation Mono';font-size:9px;line-height:12px;color:#237893">14</div>
<div class="a" style="left:41.30000000000001px;top:157px;width:377.70px;overflow:hidden;font-family:'Liberation Mono';font-size:9px;line-height:12px;color:#222;-webkit-text-stroke:0.15px currentColor"><span style="color:#111">                        F.col(</span><span style="color:#a31515">&quot;LONGITUDE&quot;</span><span style="color:#111">),</span></div>
<div class="a" style="left:0;top:169px;width:24px;text-align:right;font-family:'Liberation Mono';font-size:9px;line-height:12px;color:#237893">15</div>
<div class="a" style="left:41.30000000000001px;top:169px;width:377.70px;overflow:hidden;font-family:'Liberation Mono';font-size:9px;line-height:12px;color:#222;-webkit-text-stroke:0.15px currentColor"><span style="color:#111">                        F.col(</span><span style="color:#a31515">&quot;_LONGITUDE&quot;</span><span style="color:#111">)</span></div>
<div class="a" style="left:0;top:181px;width:24px;text-align:right;font-family:'Liberation Mono';font-size:9px;line-height:12px;color:#237893">16</div>
<div class="a" style="left:41.30000000000001px;top:181px;width:377.70px;overflow:hidden;font-family:'Liberation Mono';font-size:9px;line-height:12px;color:#222;-webkit-text-stroke:0.15px currentColor"><span style="color:#111">                )</span></div>
</div>
<svg style="left:687px;top:393px" width="48" height="22" viewBox="0 0 48 22"><rect x="0" y="1.2" width="1" height="1" fill="#7cc67c" opacity="0.6"/><rect x="1" y="1.2" width="3" height="1" fill="#5fb85f" opacity="0.6"/><rect x="4" y="1.2" width="3" height="1" fill="#9fd59f" opacity="0.6"/><rect x="7" y="1.2" width="3" height="1" fill="#5fb85f" opacity="0.6"/><rect x="13" y="1.2" width="2" height="1" fill="#7cc67c" opacity="0.6"/><rect x="17" y="1.2" width="2" height="1" fill="#5fb85f" opacity="0.6"/><rect x="19" y="1.2" width="1" height="1" fill="#5fb85f" opacity="0.6"/><rect x="20" y="1.2" width="2" height="1" fill="#9fd59f" opacity="0.6"/><rect x="22" y="1.2" width="3" height="1" fill="#9fd59f" opacity="0.6"/><rect x="26" y="1.2" width="2" height="1" fill="#5fb85f" opacity="0.6"/><rect x="29" y="1.2" width="1" height="1" fill="#7cc67c" opacity="0.6"/><rect x="30" y="1.2" width="2" height="1" fill="#9fd59f" opacity="0.6"/><rect x="36" y="1.2" width="2" height="1" fill="#9fd59f" opacity="0.6"/><rect x="4" y="2.6" width="1" height="1" fill="#9fd59f" opacity="0.5"/><rect x="6" y="2.6" width="3" height="1" fill="#5fb85f" opacity="0.5"/><rect x="10" y="2.6" width="1" height="1" fill="#5fb85f" opacity="0.5"/><rect x="11" y="2.6" width="2" height="1" fill="#9fd59f" opacity="0.5"/><rect x="14" y="2.6" width="2" height="1" fill="#7cc67c" opacity="0.5"/><rect x="16" y="2.6" width="1" height="1" fill="#9fd59f" opacity="0.5"/><rect x="17" y="2.6" width="1" height="1" fill="#5fb85f" opacity="0.5"/><rect x="18" y="2.6" width="2" height="1" fill="#9fd59f" opacity="0.5"/><rect x="21" y="2.6" width="2" height="1" fill="#7cc67c" opacity="0.5"/><rect x="23" y="2.6" width="1" height="1" fill="#5fb85f" opacity="0.5"/><rect x="26" y="2.6" width="2" height="1" fill="#7cc67c" opacity="0.5"/><rect x="30" y="2.6" width="2" height="1" fill="#7cc67c" opacity="0.5"/><rect x="32" y="2.6" width="2" height="1" fill="#5fb85f" opacity="0.5"/><rect x="34" y="2.6" width="3" height="1" fill="#7cc67c" opacity="0.5"/><rect x="0" y="4.2" width="3" height="1" fill="#5fb85f" opacity="0.5"/><rect x="5" y="4.2" width="2" height="1" fill="#5fb85f" opacity="0.5"/><rect x="7" y="4.2" width="1" height="1" fill="#5fb85f" opacity="0.5"/><rect x="8" y="4.2" width="1" height="1" fill="#5fb85f" opacity="0.5"/><rect x="10" y="4.2" width="1" height="1" fill="#5fb85f" opacity="0.5"/><rect x="11" y="4.2" width="2" height="1" fill="#9fd59f" opacity="0.5"/><rect x="14" y="4.2" width="2" height="1" fill="#7cc67c" opacity="0.5"/><rect x="18" y="4.2" width="2" height="1" fill="#9fd59f" opacity="0.5"/><rect x="20" y="4.2" width="3" height="1" fill="#7cc67c" opacity="0.5"/><rect x="23" y="4.2" width="1" height="1" fill="#9fd59f" opacity="0.5"/><rect x="25" y="4.2" width="2" height="1" fill="#9fd59f" opacity="0.5"/><rect x="29" y="4.2" width="1" height="1" fill="#7cc67c" opacity="0.5"/><rect x="31" y="4.2" width="2" height="1" fill="#7cc67c" opacity="0.5"/><rect x="34" y="4.2" width="2" height="1" fill="#7cc67c" opacity="0.5"/><rect x="36" y="4.2" width="3" height="1" fill="#9fd59f" opacity="0.5"/><rect x="1" y="6" width="1" height="1.5" fill="#999" opacity="0.7"/><rect x="2" y="6" width="2" height="1.5" fill="#999" opacity="0.7"/><rect x="5" y="6.2" width="2" height="1" fill="#e08080" opacity="0.6"/><rect x="10" y="6.2" width="3" height="1" fill="#999" opacity="0.6"/><rect x="14" y="6.2" width="3" height="1" fill="#999" opacity="0.6"/><rect x="18" y="6.2" width="2" height="1" fill="#bbb" opacity="0.6"/><rect x="20" y="6.2" width="2" height="1" fill="#e08080" opacity="0.6"/><rect x="22" y="6.2" width="1" height="1" fill="#bbb" opacity="0.6"/><rect x="24" y="6.2" width="3" height="1" fill="#e8a0a0" opacity="0.6"/><rect x="4" y="8.4" width="1" height="1.5" fill="#999" opacity="0.8"/><rect x="5" y="8.4" width="3" height="1.5" fill="#bbb" opacity="0.8"/><rect x="6" y="8.6" width="1" height="1" fill="#e8a0a0" opacity="0.7"/><rect x="7" y="8.6" width="1" height="1" fill="#e8a0a0" opacity="0.7"/><rect x="8" y="8.6" width="3" height="1" fill="#e08080" opacity="0.7"/><rect x="11" y="8.6" width="3" height="1" fill="#e08080" opacity="0.7"/><rect x="14" y="8.6" width="1" height="1" fill="#e08080" opacity="0.7"/><rect x="15" y="8.6" width="1" height="1" fill="#e08080" opacity="0.7"/><rect x="16" y="8.6" width="2" height="1" fill="#e8a0a0" opacity="0.7"/><rect x="18" y="8.6" width="2" height="1" fill="#e8a0a0" opacity="0.7"/><rect x="20" y="8.6" width="2" height="1" fill="#e08080" opacity="0.7"/><rect x="22" y="8.6" width="1" height="1" fill="#e08080" opacity="0.7"/><rect x="26" y="8.6" width="1" height="1" fill="#e8a0a0" opacity="0.7"/><rect x="3" y="10.6" width="1" height="1" fill="#bbb" opacity="0.6"/><rect x="4" y="10.6" width="2" height="1" fill="#bbb" opacity="0.6"/><rect x="7" y="10.6" width="1" height="1" fill="#999" opacity="0.6"/><rect x="12" y="12.5" width="2" height="3" fill="#bbb" opacity="0.7"/><rect x="16" y="12" width="5" height="3.5" fill="#e0a0a0" opacity="0.7"/><rect x="1" y="18.2" width="2" height="1" fill="#7cc67c" opacity="0.6"/><rect x="3" y="18.2" width="1" height="1" fill="#7cc67c" opacity="0.6"/><rect x="5" y="18.2" width="3" height="1" fill="#5fb85f" opacity="0.6"/><rect x="11" y="18.2" width="2" height="1" fill="#5fb85f" opacity="0.6"/><rect x="14" y="18.2" width="2" height="1" fill="#9fd59f" opacity="0.6"/><rect x="16" y="18.2" width="2" height="1" fill="#bbb" opacity="0.6"/><rect x="19" y="18.2" width="2" height="1" fill="#999" opacity="0.6"/><rect x="21" y="18.2" width="1" height="1" fill="#999" opacity="0.6"/><rect x="25" y="18.2" width="2" height="1" fill="#9fd59f" opacity="0.6"/><rect x="27" y="18.2" width="3" height="1" fill="#9fd59f" opacity="0.6"/><rect x="30" y="18.2" width="2" height="1" fill="#999" opacity="0.6"/><rect x="33" y="18.2" width="1" height="1" fill="#bbb" opacity="0.6"/><rect x="34" y="18.2" width="1" height="1" fill="#7cc67c" opacity="0.6"/><rect x="35" y="18.2" width="2" height="1" fill="#999" opacity="0.6"/><rect x="37" y="18.2" width="1" height="1" fill="#999" opacity="0.6"/><rect x="39.5" y="5" width="7.3" height="2" fill="#666"/><rect x="39.5" y="7" width="4" height="4" fill="#999"/></svg>
<svg style="left:781px;top:328px" width="15" height="15" viewBox="0 0 15 15"><path d="M1.5,1 H11 L13.8,3.8 V13.8 H1.2 V1.3 Z" stroke="#222" stroke-width="1.3" fill="none" stroke-linejoin="round"/><rect x="4" y="1.3" width="5.6" height="3.6" fill="#222"/><rect x="6.8" y="1.9" width="1.4" height="2.3" fill="#fff"/><rect x="3.5" y="8.2" width="8" height="5" stroke="#222" stroke-width="1.2" fill="none"/></svg>
<svg style="left:853px;top:327px" width="15" height="15" viewBox="0 0 15 15"><path d="M7.5,1.5 V13.5 M1.5,7.5 H13.5" stroke="#222" stroke-width="3"/></svg>
<svg style="left:920px;top:322px" width="30" height="26" viewBox="0 0 30 26"><ellipse cx="8.8" cy="10.1" rx="3.1" ry="2.1" transform="rotate(22 8.8 10.1)" stroke="#111" stroke-width="1.4" fill="none"/><ellipse cx="8.8" cy="17.5" rx="3.1" ry="2.1" transform="rotate(-22 8.8 17.5)" stroke="#111" stroke-width="1.4" fill="none"/><path d="M11.6,12.2 L13.4,13.8 L11.6,15.4" stroke="#222" stroke-width="1" fill="none"/><path d="M12.6,13.2 L20.8,8.8 L21.6,10 L14.2,14.4 Z" stroke="#333" stroke-width="0.8" fill="#f4f4f4"/><path d="M12.6,14.4 L20.8,18.8 L21.6,17.6 L14.2,13.2 Z" stroke="#333" stroke-width="0.8" fill="#f4f4f4"/></svg>
<svg style="left:999px;top:327px" width="15" height="16" viewBox="0 0 15 16"><path d="M1.5,1.5 L10,8 L1.5,14.5 Z" fill="#222"/><rect x="10.3" y="1.5" width="2.8" height="13" fill="#222"/></svg>
<svg style="left:1070px;top:326px" width="16" height="18" viewBox="0 0 16 18"><path d="M4.2,10 V4.2 Q4.2,3 5.3,3 Q6.4,3 6.4,4.2 V8.6 V2.6 Q6.4,1.3 7.6,1.3 Q8.8,1.3 8.8,2.6 V8.6 V3 Q8.8,1.8 10,1.8 Q11.2,1.8 11.2,3 V8.8 V5 Q11.2,3.8 12.3,3.8 Q13.5,3.8 13.5,5 V11 Q13.5,16.5 8.5,16.5 Q5.8,16.5 4.4,14.2 L1.6,10.2 Q1,9.2 1.9,8.7 Q2.8,8.3 3.5,9.1 Z" stroke="#b9c6d6" stroke-width="1" fill="none" stroke-linejoin="round"/></svg>
<svg style="left:1143px;top:327px" width="16" height="16" viewBox="0 0 16 16"><path d="M2.6,6.8 A5.6,5.6 0 0 1 12.4,4.4" stroke="#222" stroke-width="2.2" fill="none"/><path d="M14.2,1.4 V6.6 H9 Z" fill="#222"/><path d="M13.4,9.2 A5.6,5.6 0 0 1 3.6,11.6" stroke="#222" stroke-width="2.2" fill="none"/><path d="M1.8,14.6 V9.4 H7 Z" fill="#222"/></svg>
<svg style="left:1201px;top:323px" width="19" height="19" viewBox="0 0 19 19"><circle cx="9.6" cy="9.1" r="6.9" stroke="#111" stroke-width="2.4" fill="none"/><path d="M6.4,9.0 L8.9,11.4 L12.9,7.4" stroke="#111" stroke-width="2.6" fill="none"/></svg>
<svg style="left:1240px;top:324px" width="10" height="10" viewBox="0 0 10 10"><path d="M1,9 L8.6,1.4" stroke="#222" stroke-width="0.9"/><path d="M1,5 V9 H5 Z" fill="#222"/><path d="M9,1 L6,1.6 L8.4,4 Z" fill="#bbb"/></svg>
<div class="a" style="left:1253px;top:319px;width:7px;height:24px;background:#6f6f6f;border-radius:3.5px"></div>
<div class="a" style="left:749px;top:350px;width:498px;height:109px;border-radius:6px 0 0 6px;background:#d3e1ee"></div>
<div class="a" style="left:750px;top:351px;width:497px;height:106px;border-radius:5px 0 0 5px;background:#d6d8db"></div>
<div class="a" style="left:752px;top:353px;width:495px;height:102px;border-radius:2px 0 0 2px;background:#a6aab0"></div>
<div class="a" style="left:754px;top:355px;width:493px;height:99px;background:#fcfcfc"></div>
<div class="a" style="left:754px;top:355px;width:31px;height:53px;background:#d6d6d6;"></div>
<div class="a " style="left:803px;top:361.78px;font-size:9px;line-height:13px;height:13px;color:#1010f0;font-weight:400;font-family:'Liberation Mono';-webkit-text-stroke:0.2px #1010f0"># Airline Customer Engagement Demo</div>
<div class="a " style="left:794px;top:414.62px;font-size:21px;line-height:29px;height:29px;color:#24292e;font-weight:700;font-family:'Liberation Sans';transform:scaleX(0.934);transform-origin:0 0">Airline Customer Engagement Demo</div>
<div class="a " style="left:794px;top:473.48px;font-size:11.6px;line-height:16px;height:16px;color:#333;font-weight:400;font-family:'Liberation Sans';">In this notebook, you can not only run a module to see the results, but also perform ad-</div>
<div class="a " style="left:794px;top:488.18px;font-size:11.6px;line-height:16px;height:16px;color:#333;font-weight:400;font-family:'Liberation Sans';letter-spacing:-0.04px">hoc analyses on input tables or modules and explore new logics / features / models.</div>
<div class="a " style="left:794px;top:549.67px;font-size:16.25px;line-height:23px;height:23px;color:#24292e;font-weight:700;font-family:'Liberation Sans';">Module Execution</div>
<div class="a" style="left:0;top:601px;width:1265px;height:11px;background:linear-gradient(to right,#33404f 0%,#364757 35%,#3c535a 65%,#3e575d 100%)"></div>
<div class="a " style="left:0px;top:600.97px;font-size:9.9px;line-height:14px;height:14px;color:#fff;font-weight:400;font-family:'Liberation Sans';-webkit-text-stroke:0.35px #fff">© 2016 - 2018 - DataSense Analytics Inc.</div>
</body></html>
